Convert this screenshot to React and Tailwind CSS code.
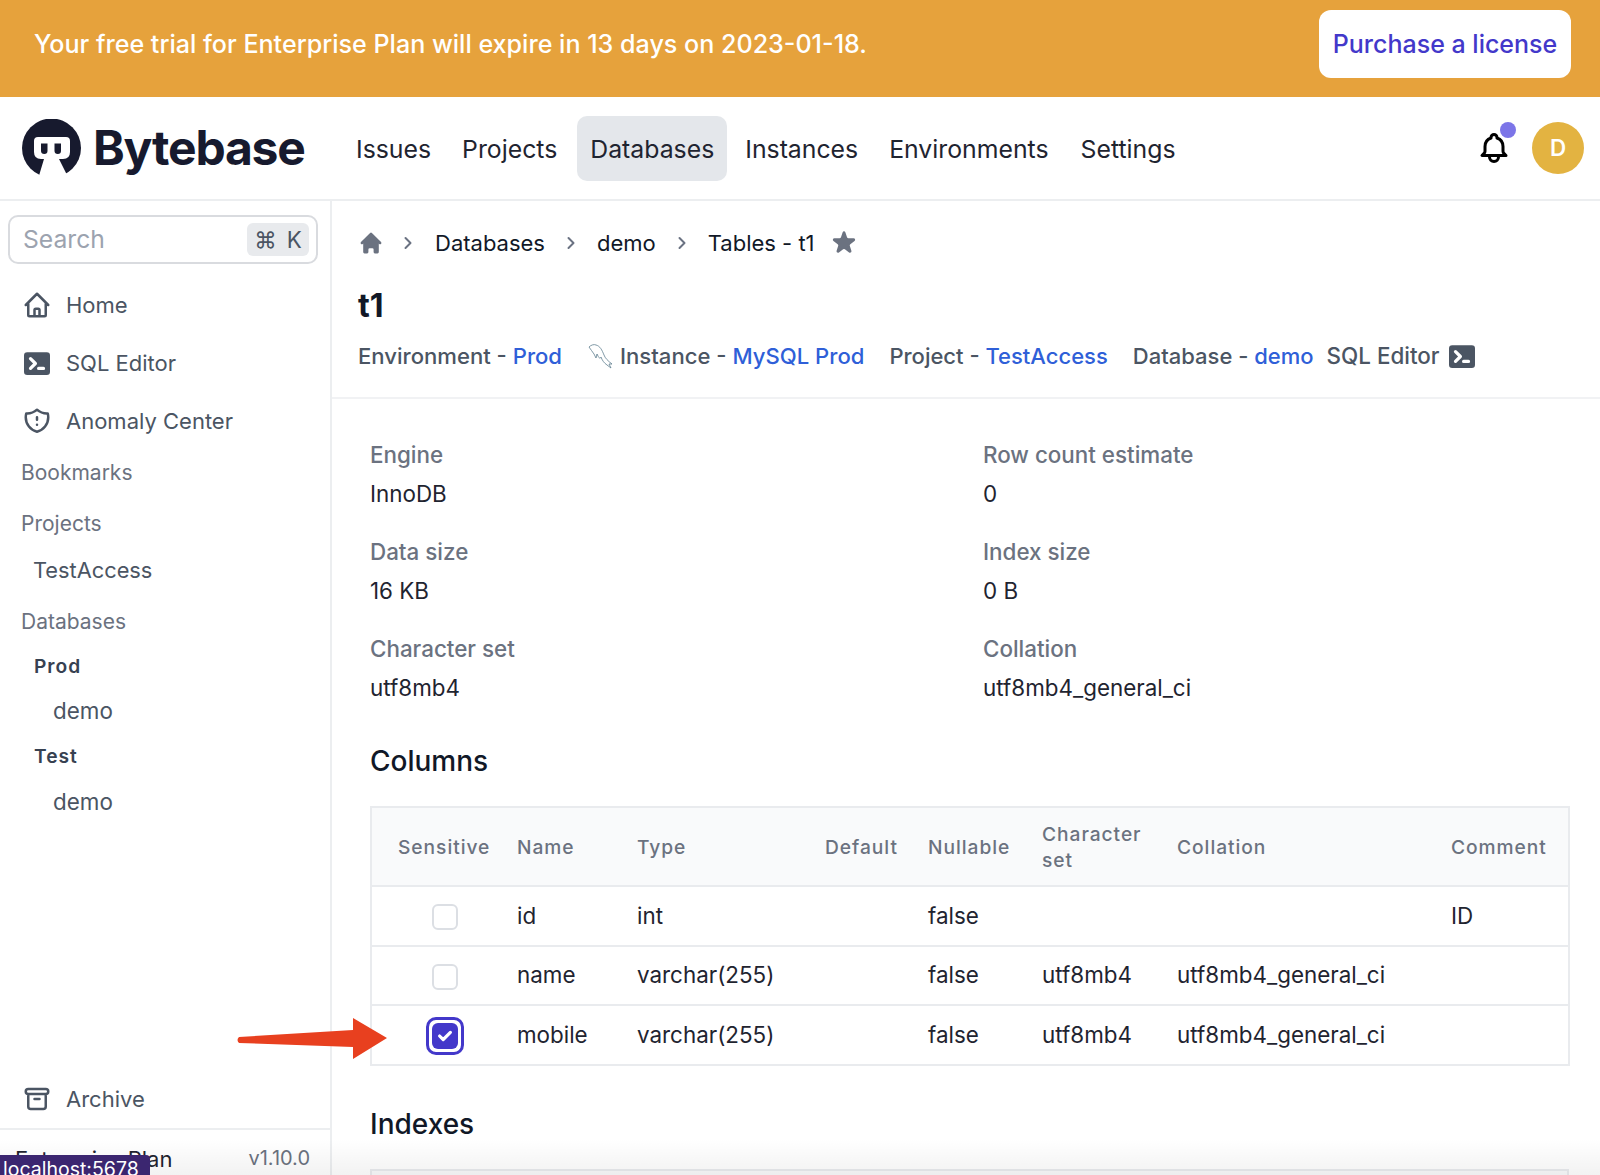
import { ChevronRight } from "lucide-react";

const terminalPath = "M2 5a2 2 0 012-2h12a2 2 0 012 2v10a2 2 0 01-2 2H4a2 2 0 01-2-2V5zm3.293 1.293a1 1 0 011.414 0l3 3a1 1 0 010 1.414l-3 3a1 1 0 01-1.414-1.414L7.586 10 5.293 7.707a1 1 0 010-1.414zM11 12a1 1 0 100 2h3a1 1 0 100-2h-3z";

function Outline({ d, className }) {
  return (
    <svg viewBox="0 0 24 24" fill="none" stroke="currentColor" strokeWidth="2" strokeLinecap="round" strokeLinejoin="round" className={className}>
      <path d={d} />
    </svg>
  );
}

function Terminal({ className }) {
  return (
    <svg viewBox="2 3 16 14" fill="currentColor" className={className}>
      <path fillRule="evenodd" clipRule="evenodd" d={terminalPath} />
    </svg>
  );
}

function Logo() {
  return (
    <svg viewBox="0 0 61 58" className="w-[61px] h-[58px] shrink-0">
      <circle cx="30.5" cy="29" r="29.5" fill="#171a2e" />
      <path d="M13 22q0-4 4-4h28q4 0 4 4v11q0 7-7 7h-4l10 20H17l6-20h-3q-7 0-7-7z" fill="#fff" />
      <path d="M20 24.5h6.5v7.5q0 3-3.2 3T20 32z" fill="#171a2e" />
      <path d="M33.5 24.5H40v7.5q0 3-3.2 3t-3.3-3z" fill="#171a2e" />
    </svg>
  );
}

function Dolphin() {
  return (
    <svg viewBox="0 0 26 26" fill="none" stroke="#5f7f8f" strokeWidth="0.8" className="w-[26px] h-[26px] shrink-0">
      <path d="M1 4C3 2 6 1 8 2c4 1 6 5 8 10 1 3 4 6 8 9h-3l2 4-4-3c-3-2-5-5-6-8-1 2-2 1-3-1l-1-2-1 4-2-4C4 9 3 6 1 4z" />
    </svg>
  );
}

function Crumb() {
  return <ChevronRight size={20} strokeWidth={2.4} className="text-gray-500 shrink-0" />;
}

function MetaItem({ label, value, className }) {
  return (
    <span className={className}>
      {label} - <span className="text-[#2f5fd8]">{value}</span>
    </span>
  );
}

function Field({ label, value }) {
  return (
    <div className="h-[97px]">
      <div className="font-medium text-[#6b7280] leading-[34px]">{label}</div>
      <div className="text-[#1f2430] leading-[34px] mt-[5px]">{value}</div>
    </div>
  );
}

function SideLink({ d, solid, label, className }) {
  return (
    <div className={`flex items-center h-[34px] text-[22px] text-[#4b5563] ${className}`}>
      {solid ? <Terminal className="w-[26px] h-[23px] ml-[24px] mr-[16px] shrink-0" /> : <Outline d={d} className="w-[30px] h-[30px] ml-[22px] mr-[14px] shrink-0" />}
      {label}
    </div>
  );
}

function Check({ on }) {
  if (!on) return <div className="w-[26px] h-[26px] ml-[60px] mt-[3px] rounded-[6px] border-2 border-[#dcdfe4] bg-white" />;
  return (
    <div className="w-[38px] h-[38px] ml-[54px] mt-[3px] rounded-[10px] border-[3px] border-[#4338ca] flex items-center justify-center">
      <div className="w-[26px] h-[26px] rounded-[6px] bg-[#4338ca] flex items-center justify-center">
        <svg viewBox="0 0 20 20" fill="#fff" stroke="#fff" strokeWidth="1.5" className="w-[18px] h-[18px]">
          <path fillRule="evenodd" clipRule="evenodd" d="M16.707 5.293a1 1 0 010 1.414l-8 8a1 1 0 01-1.414 0l-4-4a1 1 0 011.414-1.414L8 12.586l7.293-7.293a1 1 0 011.414 0z" />
        </svg>
      </div>
    </div>
  );
}

const rows = [
  { name: "id", type: "int", nullable: "false", charset: "", collation: "", comment: "ID" },
  { name: "name", type: "varchar(255)", nullable: "false", charset: "utf8mb4", collation: "utf8mb4_general_ci", comment: "" },
  { name: "mobile", type: "varchar(255)", nullable: "false", charset: "utf8mb4", collation: "utf8mb4_general_ci", comment: "", on: true },
];

const headers = ["Name", "Type", "Default", "Nullable", "Character set", "Collation", "Comment"];

export default function App() {
  return (
    <div className="relative h-[1175px] overflow-hidden bg-white flex flex-col text-[22.4px] text-[#1f2430] font-['Inter',sans-serif]">
      <div className="h-[97px] shrink-0 bg-[#e6a23c] flex items-center justify-between pl-[34px] pr-[29px] pb-[9px]">
        <span className="mt-[2px] text-[25.1px] font-medium text-white">Your free trial for Enterprise Plan will expire in 13 days on 2023-01-18.</span>
        <button className="w-[252px] h-[68px] pt-[2px] bg-white rounded-[12px] text-[25px] font-medium text-[#4338ca]">Purchase a license</button>
      </div>

      <div className="h-[104px] shrink-0 border-b-2 border-[#eceef0] flex items-center pl-[21px] pr-[16px]">
        <Logo />
        <span className="ml-[11px] text-[48px] font-bold tracking-[-0.025em] text-[#171a2e] w-[250px]">Bytebase</span>
        <nav className="flex gap-[5px] text-[24.8px] text-[#1f2430]">
          <a className="px-[13px] pt-[3px] h-[65px] flex items-center">Issues</a>
          <a className="px-[13px] pt-[3px] h-[65px] flex items-center">Projects</a>
          <a className="ml-[2px] px-[13px] pt-[3px] h-[65px] flex items-center bg-[#e4e7eb] rounded-[10px]">Databases</a>
          <a className="px-[13px] pt-[3px] h-[65px] flex items-center">Instances</a>
          <a className="px-[13px] pt-[3px] h-[65px] flex items-center">Environments</a>
          <a className="ml-[1px] px-[13px] pt-[3px] h-[65px] flex items-center">Settings</a>
        </nav>
        <div className="ml-auto flex items-center gap-[20px]">
          <div className="relative w-[36px] h-[36px]">
            <Outline d="M15 17h5l-1.405-1.405A2.032 2.032 0 0118 14.158V11a6.002 6.002 0 00-4-5.659V5a2 2 0 10-4 0v.341C7.67 6.165 6 8.388 6 11v3.159c0 .538-.214 1.055-.595 1.436L4 17h5m6 0v1a3 3 0 11-6 0v-1m6 0H9" className="w-[36px] h-[36px] text-black" />
            <span className="absolute -top-[8px] right-[-4px] w-[16px] h-[16px] rounded-full bg-[#7c75e8]" />
          </div>
          <div className="w-[52px] h-[52px] rounded-full bg-[#e3b341] flex items-center justify-center text-white font-semibold">D</div>
        </div>
      </div>

      <div className="flex flex-1 min-h-0">
        <aside className="w-[332px] shrink-0 border-r-2 border-[#eceef0] flex flex-col pt-[14px]">
          <div className="ml-[8px] mr-[12px] h-[49px] border-2 border-[#d9dbdf] rounded-[10px] flex items-center justify-between pl-[13px] pr-[7px] text-[24.7px] text-[#9ca3af]">
            Search
            <span className="w-[62px] h-[33px] bg-[#e8eaed] rounded-[6px] flex items-center justify-center gap-[10px] text-[22.4px] text-[#4b5563]">⌘<span>K</span></span>
          </div>
          <SideLink className="mt-[24px]" label="Home" d="M3 12l2-2m0 0l7-7 7 7M5 10v10a1 1 0 001 1h3m10-11l2 2m-2-2v10a1 1 0 01-1 1h-3m-6 0a1 1 0 001-1v-4a1 1 0 011-1h2a1 1 0 011 1v4a1 1 0 001 1m-6 0h6" />
          <SideLink className="mt-[24px]" label="SQL Editor" solid />
          <SideLink className="mt-[24px]" label="Anomaly Center" d="M20.618 5.984A11.955 11.955 0 0112 2.944a11.955 11.955 0 01-8.618 3.04A12.02 12.02 0 003 9c0 5.591 3.824 10.29 9 11.622 5.176-1.332 9-6.03 9-11.622 0-1.042-.133-2.052-.382-3.016zM12 9v2m0 4h.01" />
          <div className="pl-[21px] mt-[18px] h-[34px] leading-[34px] text-[21px] text-[#6b7280]">Bookmarks</div>
          <div className="pl-[21px] mt-[17px] h-[34px] leading-[34px] text-[21px] text-[#6b7280]">Projects</div>
          <div className="pl-[33px] mt-[12px] h-[34px] leading-[34px] text-[21.8px] text-[#4b5563]">TestAccess</div>
          <div className="pl-[21px] mt-[18px] h-[34px] leading-[34px] text-[21px] text-[#6b7280]">Databases</div>
          <div className="pl-[34px] mt-[10px] h-[34px] leading-[34px] text-[19.2px] font-semibold tracking-wider text-[#374151]">Prod</div>
          <div className="pl-[53px] mt-[11px] h-[34px] leading-[34px] text-[#4b5563]">demo</div>
          <div className="pl-[34px] mt-[11px] h-[34px] leading-[34px] text-[19.2px] font-semibold tracking-wider text-[#374151]">Test</div>
          <div className="pl-[53px] mt-[12px] h-[34px] leading-[34px] text-[#4b5563]">demo</div>
          <SideLink className="mt-auto mb-[12px]" label="Archive" d="M5 8h14M5 8a2 2 0 110-4h14a2 2 0 110 4M5 8v10a2 2 0 002 2h10a2 2 0 002-2V8m-9 4h4" />
          <div className="h-[47px] shrink-0 border-t-2 border-[#eceef0] flex items-start justify-between pl-[15px] pr-[20px] pt-[13px]">
            <span className="text-[22px] text-[#1f2430]">Enterprise Plan</span>
            <span className="text-[#6b7280] text-[20px]">v1.10.0</span>
          </div>
        </aside>

        <main className="flex-1 min-w-0">
          <div className="h-[198px] border-b-2 border-[#f1f2f4] pl-[26px] pt-[25px] text-[22px]">
            <div className="flex items-center h-[34px] text-[#111827]">
              <svg viewBox="0 0 20 20" fill="#6b7280" className="w-[26px] h-[26px] shrink-0">
                <path d="M10.707 2.293a1 1 0 00-1.414 0l-7 7a1 1 0 001.414 1.414L4 10.414V17a1 1 0 001 1h2a1 1 0 001-1v-2a1 1 0 011-1h2a1 1 0 011 1v2a1 1 0 001 1h2a1 1 0 001-1v-6.586l.293.293a1 1 0 001.414-1.414l-7-7z" />
              </svg>
              <span className="ml-[14px]"><Crumb /></span>
              <span className="ml-[17px]">Databases</span>
              <span className="ml-[16px]"><Crumb /></span>
              <span className="ml-[16px]">demo</span>
              <span className="ml-[16px]"><Crumb /></span>
              <span className="ml-[16px]">Tables - t1</span>
              <svg viewBox="0 0 20 20" fill="#6b7280" className="w-[30px] h-[30px] ml-[14px] shrink-0">
                <path d="M9.049 2.927c.3-.921 1.603-.921 1.902 0l1.07 3.292a1 1 0 00.95.69h3.462c.969 0 1.371 1.24.588 1.81l-2.8 2.034a1 1 0 00-.364 1.118l1.07 3.292c.3.921-.755 1.688-1.54 1.118l-2.8-2.034a1 1 0 00-1.175 0l-2.8 2.034c-.784.57-1.838-.197-1.539-1.118l1.07-3.292a1 1 0 00-.364-1.118L2.98 8.72c-.783-.57-.38-1.81.588-1.81h3.461a1 1 0 00.951-.69l1.07-3.292z" />
              </svg>
            </div>
            <h1 className="text-[32px] font-bold leading-[40px] mt-[26px] text-[#111827]">t1</h1>
            <div className="flex items-center h-[34px] leading-[34px] mt-[13px] text-[#4b5563] font-medium">
              <MetaItem className="text-[22.1px]" label="Environment" value="Prod" />
              <span className="ml-[26px] mr-[6px]"><Dolphin /></span>
              <MetaItem className="text-[22.1px]" label="Instance" value="MySQL Prod" />
              <MetaItem className="ml-[25px]" label="Project" value="TestAccess" />
              <MetaItem className="ml-[25px]" label="Database" value="demo" />
              <span className="ml-[13px] text-[22.4px]">SQL Editor</span>
              <Terminal className="w-[26px] h-[23px] ml-[10px] text-[#4b5563] shrink-0" />
            </div>
          </div>

          <div className="pl-[38px] pr-[31px] pt-[39px]">
            <div className="grid grid-cols-[613px_1fr]">
              <Field label="Engine" value="InnoDB" />
              <Field label="Row count estimate" value="0" />
              <Field label="Data size" value="16 KB" />
              <Field label="Index size" value="0 B" />
              <Field label="Character set" value="utf8mb4" />
              <Field label="Collation" value="utf8mb4_general_ci" />
            </div>
            <h2 className="text-[28px] font-medium leading-[38px] mt-[13px] text-[#111827]">Columns</h2>
            <table className="table-fixed w-[1198px] mt-[26px] border-2 border-[#e9ebee] border-collapse">
              <colgroup>
                <col className="w-[146px]" />
                <col className="w-[120px]" />
                <col className="w-[188px]" />
                <col className="w-[103px]" />
                <col className="w-[114px]" />
                <col className="w-[135px]" />
                <col className="w-[274px]" />
                <col className="w-[118px]" />
              </colgroup>
              <thead className="bg-[#f9fafb]">
                <tr className="h-[79px] border-b-2 border-[#e9ebee]">
                  <th className="pl-[26px] text-left font-medium text-[19.2px] leading-[26px] tracking-wider text-[#6b7280] whitespace-nowrap">Sensitive</th>
                  {headers.map((h) => (
                    <th key={h} className="text-left font-medium text-[19.2px] leading-[26px] tracking-wider text-[#6b7280] pr-[10px]">{h}</th>
                  ))}
                </tr>
              </thead>
              <tbody>
                {rows.map((r) => (
                  <tr key={r.name} className="h-[59.5px] border-b-2 border-[#e9ebee] last:border-b-0 text-[#1f2430]">
                    <td><Check on={r.on} /></td>
                    <td>{r.name}</td>
                    <td>{r.type}</td>
                    <td></td>
                    <td>{r.nullable}</td>
                    <td>{r.charset}</td>
                    <td className="whitespace-nowrap">{r.collation}</td>
                    <td>{r.comment}</td>
                  </tr>
                ))}
              </tbody>
            </table>
            <h2 className="text-[28px] font-medium leading-[38px] mt-[39px] text-[#111827]">Indexes</h2>
            <div className="h-[40px] mt-[26px] border-2 border-[#e9ebee] bg-[#f9fafb]" />
          </div>
        </main>
      </div>

      {/* annotation arrow drawn over the screenshot */}
      <svg viewBox="0 0 160 44" className="absolute left-[235px] top-[1017px] w-[160px] h-[44px]">
        <path d="M4 20L118 13V1L152 21 118 42V30L4 26Q1 23 4 20z" fill="#e8401f" />
      </svg>

      <div className="absolute inset-x-0 bottom-0 h-[36px] bg-linear-to-b from-transparent to-black/5 pointer-events-none" />
      <div className="absolute left-0 bottom-0 w-[150px] h-[20px] bg-[#3b2670] rounded-tr-[4px] pl-[3px] text-[19.5px] leading-[28px] text-white overflow-hidden">localhost:5678</div>
    </div>
  );
}
